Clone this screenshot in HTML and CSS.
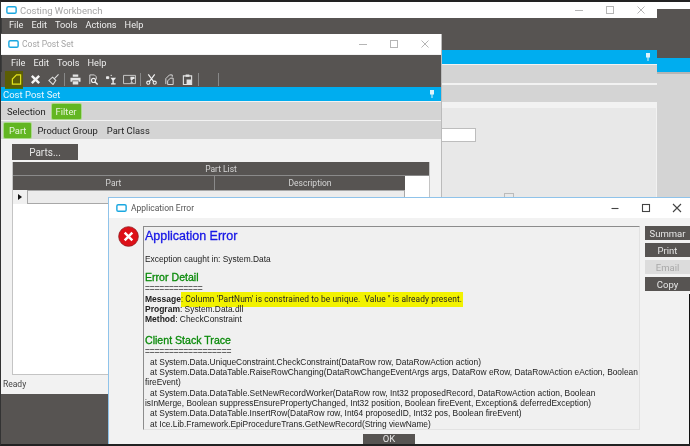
FILE: index.html
```html
<!DOCTYPE html>
<html lang="en">
<head>
    <meta charset="UTF-8">
    <title>Application Error</title>
    <link rel="stylesheet" href="styles.css">
</head>
<body>
    <div class="desktop">
        <!-- window peeking out on the right -->
        <div class="window back-window">
            <div class="dark-fill"></div>
            <div class="blue-bar"></div>
            <div class="gray-fill"></div>
        </div>

        <!-- Costing Workbench -->
        <div class="window workbench">
            <div class="title-bar">
                <svg class="app-icon" viewBox="0 0 12 9"><rect x="0.8" y="0.8" width="10.4" height="7.4" rx="1.5" fill="#fff" stroke="#1aa7e0" stroke-width="1.6"/></svg>
                <span class="title-text">Costing Workbench</span>
                <div class="win-controls">
                    <svg viewBox="0 0 10 10"><path d="M1 5.5h8" stroke="#b5b5b5"/></svg>
                    <svg viewBox="0 0 10 10"><rect x="1.5" y="1.5" width="7" height="7" fill="none" stroke="#b5b5b5"/></svg>
                    <svg viewBox="0 0 10 10"><path d="M1.5 1.5l7 7M8.5 1.5l-7 7" stroke="#b5b5b5"/></svg>
                </div>
            </div>
            <div class="menu-bar">
                <span>File</span><span>Edit</span><span>Tools</span><span>Actions</span><span>Help</span>
            </div>
            <div class="workbench-main">
                <div class="blue-bar pinned">
                    <svg class="pin" viewBox="0 0 6 8"><path d="M1 0h4v4.500h-1.500v3.500h-1v-3.500h-1.500z" fill="#dff3fb"/></svg>
                </div>
                <div class="gray-strip"></div>
                <div class="gray-strip second"></div>
                <div class="back-panel">
                    <div class="back-input"></div>
                    <div class="back-knob"></div>
                </div>
            </div>
        </div>

        <!-- Cost Post Set -->
        <div class="window cost-post">
            <div class="title-bar tall">
                <svg class="app-icon" viewBox="0 0 12 9"><rect x="0.8" y="0.8" width="10.4" height="7.4" rx="1.5" fill="#fff" stroke="#1aa7e0" stroke-width="1.6"/></svg>
                <span class="title-text small">Cost Post Set</span>
                <div class="win-controls">
                    <svg viewBox="0 0 10 10"><path d="M1 5.5h8" stroke="#b5b5b5"/></svg>
                    <svg viewBox="0 0 10 10"><rect x="1.5" y="1.5" width="7" height="7" fill="none" stroke="#b5b5b5"/></svg>
                    <svg viewBox="0 0 10 10"><path d="M1.5 1.5l7 7M8.5 1.5l-7 7" stroke="#b5b5b5"/></svg>
                </div>
            </div>
            <div class="menu-bar short">
                <span>File</span><span>Edit</span><span>Tools</span><span>Help</span>
            </div>
            <div class="tool-bar">
                <div class="tool active">
                    <svg viewBox="0 0 12 12"><path d="M1.500 11V5.500L6 1h4.500v10z" fill="none" stroke="#e3e51c" stroke-width="1.300"/></svg>
                </div>
                <div class="tool">
                    <svg viewBox="0 0 12 12"><path d="M2 2l8 8M10 2l-8 8" stroke="#f4f4f4" stroke-width="2.600"/></svg>
                </div>
                <div class="tool">
                    <svg viewBox="0 0 12 12"><path d="M11.500 .5L7 5M5 3.500l3.500 3.500-3 4.500-4.500-4.500z" fill="none" stroke="#dcdcdc" stroke-width="1.200"/></svg>
                </div>
                <i class="tool-sep"></i>
                <div class="tool">
                    <svg viewBox="0 0 12 12"><path d="M3 0.500h6v2.500h-6zM0.500 4h11v4.500h-2v-1.500h-7v1.500h-2zM3 8h6v3.500h-6z" fill="#e4e4e4"/></svg>
                </div>
                <div class="tool">
                    <svg viewBox="0 0 12 12"><path d="M2 11V1h5l2 2v3" fill="none" stroke="#dcdcdc"/><circle cx="6" cy="7" r="2.200" fill="none" stroke="#f0f0f0" stroke-width="1.200"/><path d="M7.500 8.500l3 3" stroke="#f0f0f0" stroke-width="1.500"/></svg>
                </div>
                <div class="tool">
                    <svg viewBox="0 0 12 12"><path d="M0.500 3h2.500v2h-2.500zM5 1.500h1.500" stroke="#eee" fill="#eee"/><path d="M5 4h6l-2.500 3v3h2v1.500h-5v-1.500h1.500v-3z" fill="#eee"/></svg>
                </div>
                <div class="tool wide">
                    <svg viewBox="0 0 14 12"><path d="M0.500 1.500h13v9h-13z" fill="none" stroke="#cfcfcf"/><path d="M8 3h4.500v2.500h-1.500l-2 2 2 2h-3l1-2-1-2z" fill="#e8e8e8"/></svg>
                </div>
                <i class="tool-sep"></i>
                <div class="tool">
                    <svg viewBox="0 0 12 12"><path d="M2.500 .5l6 8M9.500 .5l-6 8" stroke="#f0f0f0" stroke-width="1.300"/><circle cx="2.500" cy="9.500" r="1.700" fill="none" stroke="#f0f0f0" stroke-width="1.200"/><circle cx="9.500" cy="9.500" r="1.700" fill="none" stroke="#f0f0f0" stroke-width="1.200"/></svg>
                </div>
                <div class="tool">
                    <svg viewBox="0 0 12 12"><path d="M2 11V5l4-4h3v2M4 11.500h6V4.500H7L4 7.500z" fill="none" stroke="#e4e4e4"/></svg>
                </div>
                <div class="tool">
                    <svg viewBox="0 0 12 12"><path d="M1.500 2h9v9.500h-9z" fill="none" stroke="#e4e4e4" stroke-width="1.200"/><path d="M4 .5h4v2.500h-4zM5 6h5v5h-5z" fill="#e4e4e4"/></svg>
                </div>
                <i class="tool-sep"></i>
                <i class="tool-sep far"></i>
            </div>
            <div class="blue-bar pinned titled">
                <span>Cost Post Set</span>
                <svg class="pin" viewBox="0 0 6 8"><path d="M1 0h4v4.500h-1.500v3.500h-1v-3.500h-1.500z" fill="#dff3fb"/></svg>
            </div>
            <div class="tabs">
                <span class="tab">Selection</span>
                <span class="tab on">Filter</span>
            </div>
            <div class="tabs sub">
                <span class="tab on">Part</span>
                <span class="tab">Product Group</span>
                <span class="tab">Part Class</span>
            </div>
            <div class="filter-body">
                <button class="parts-btn">Parts...</button>
                <div class="part-list">
                    <div class="grid-caption">Part List</div>
                    <div class="grid-head">
                        <span class="col-part">Part</span>
                        <span class="col-desc">Description</span>
                    </div>
                    <div class="grid-row">
                        <span class="row-mark"><i></i></span>
                        <span class="row-cell"></span>
                    </div>
                </div>
            </div>
            <div class="status-bar">Ready</div>
        </div>

        <!-- Application Error dialog -->
        <div class="window error-dialog">
            <div class="title-bar dlg-title">
                <svg class="app-icon" viewBox="0 0 12 9"><rect x="0.8" y="0.8" width="10.4" height="7.4" rx="1.5" fill="#fff" stroke="#1aa7e0" stroke-width="1.6"/></svg>
                <span class="title-text dark">Application Error</span>
                <div class="win-controls dlg-controls">
                    <svg viewBox="0 0 10 10"><path d="M1.500 5.500h7" stroke="#444" stroke-width="1.100"/></svg>
                    <svg viewBox="0 0 10 10"><rect x="1.500" y="1.500" width="7" height="7" fill="none" stroke="#444" stroke-width="1.100"/></svg>
                    <svg viewBox="0 0 10 10"><path d="M1 1l8 8M9 1l-8 8" stroke="#444" stroke-width="1.100"/></svg>
                </div>
            </div>
            <div class="dlg-body">
                <div class="dlg-main">
                    <svg class="err-icon" viewBox="0 0 22 22">
                        <circle cx="11" cy="11" r="10.300" fill="#dd1018" stroke="#8e1a1e" stroke-width="0.800"/>
                        <path d="M7 7l8 8M15 7l-8 8" stroke="#fff" stroke-width="2.600"/>
                    </svg>
                    <div class="detail">
                        <h1>Application Error</h1>
                        <p class="line first">Exception caught in: System.Data</p>
                        <h2>Error Detail</h2>
                        <p class="line rule">============</p>
                        <p class="line"><b>Message</b><span class="mark">: Column 'PartNum' is constrained to be unique.&nbsp; Value '' is already present.</span></p>
                        <p class="line"><b>Program</b>: System.Data.dll</p>
                        <p class="line"><b>Method</b>: CheckConstraint</p>
                        <h2 class="gap">Client Stack Trace</h2>
                        <p class="line rule">==================</p>
                        <p class="line at">at System.Data.UniqueConstraint.CheckConstraint(DataRow row, DataRowAction action)</p>
                        <p class="line at">at System.Data.DataTable.RaiseRowChanging(DataRowChangeEventArgs args, DataRow eRow, DataRowAction eAction, Boolean</p>
                        <p class="line">fireEvent)</p>
                        <p class="line at">at System.Data.DataTable.SetNewRecordWorker(DataRow row, Int32 proposedRecord, DataRowAction action, Boolean</p>
                        <p class="line">isInMerge, Boolean suppressEnsurePropertyChanged, Int32 position, Boolean fireEvent, Exception&amp; deferredException)</p>
                        <p class="line at">at System.Data.DataTable.InsertRow(DataRow row, Int64 proposedID, Int32 pos, Boolean fireEvent)</p>
                        <p class="line at">at Ice.Lib.Framework.EpiProcedureTrans.GetNewRecord(String viewName)</p>
                    </div>
                    <div class="side-btns">
                        <button class="dlg-btn">Summar</button>
                        <button class="dlg-btn">Print</button>
                        <button class="dlg-btn off">Email</button>
                        <button class="dlg-btn">Copy</button>
                        <div class="edge"></div>
                    </div>
                </div>
                <div class="dlg-foot">
                    <button class="ok-btn">OK</button>
                </div>
            </div>
        </div>
    </div>
</body>
</html>
```

FILE: styles.css
```css
:root {
    --dark: #575452;
    --blue: #00adef;
    --strip: #d4d4d4;
    --soft: #f2f2f2;
}

* {
    margin: 0;
    padding: 0;
    box-sizing: border-box;
    font-family: 'Roboto', sans-serif;
}

body {
    background: #111;
    overflow: hidden;
}

.desktop {
    position: relative;
    width: 690px;
    height: 446px;
    background: #fff;
    border-top: 2px solid #222;
    border-bottom: 2px solid #222;
    border-left: 1px solid #333;
    overflow: hidden;
    filter: blur(0.35px);
}

/* Windows sit on a free canvas */
.window {
    position: absolute;
    display: flex;
    flex-direction: column;
}

.back-window {
    left: 656px;
    top: 7px;
    width: 33px;
    height: 437px;
}

.dark-fill {
    height: 49px;
    background: var(--dark);
}

.gray-fill {
    flex: 1;
    background: var(--strip);
    border-top: 2px solid #b5b5b5;
}

.blue-bar {
    height: 14px;
    background: var(--blue);
    flex-shrink: 0;
}

.workbench {
    left: 0;
    top: 0;
    width: 656px;
    height: 442px;
    background: var(--dark);
}

.title-bar {
    height: 16px;
    background: #fff;
    display: flex;
    align-items: center;
    padding-left: 5px;
    flex-shrink: 0;
}

.title-bar.tall {
    height: 20px;
    padding-left: 7px;
}

.app-icon {
    width: 11px;
    height: 8px;
    margin-right: 3px;
    flex-shrink: 0;
}

.title-text {
    font-size: 9.500px;
    color: #a5a5a5;
}

.title-text.small {
    font-size: 8.500px;
}

.title-text.dark {
    font-size: 8.500px;
    color: #555;
}

.win-controls {
    margin-left: auto;
    display: flex;
    gap: 21px;
    padding-right: 11px;
}

.win-controls svg {
    width: 10px;
    height: 10px;
}

.menu-bar {
    height: 15px;
    padding: 0 0 2px 7px;
    display: flex;
    align-items: center;
    gap: 8px;
    color: #eeeeee;
    font-size: 9.200px;
    background: var(--dark);
    border-left: 1px solid #3c3c3c;
}

.workbench-main {
    flex: 1;
    margin: 17px 0 0 440px;
    display: flex;
    flex-direction: column;
    border-left: 1px solid #bbb;
    background: var(--soft);
}

.pinned {
    display: flex;
    align-items: center;
    justify-content: space-between;
}

.workbench-main .pinned {
    justify-content: flex-end;
}

.pin {
    width: 6px;
    height: 8px;
    margin-right: 6px;
}

.gray-strip {
    height: 18px;
    margin-top: 1px;
    background: var(--strip);
}

.gray-strip.second {
    margin-top: 2px;
    height: 17px;
}

.back-panel {
    position: relative;
    flex: 1;
    margin: 4px 1px 0 0;
    background: #e8e8e8;
    border-top: 2px solid #f2f2f2;
}

.back-input {
    margin-top: 20px;
    width: 34px;
    height: 14px;
    background: #fff;
    border: 1px solid #bdbdbd;
    border-left: none;
}

.back-knob {
    margin: 51px 0 0 62px;
    width: 10px;
    height: 10px;
    border: 1px solid #bbb;
}

.cost-post {
    left: 0;
    top: 32px;
    width: 441px;
    height: 360px;
    background: var(--soft);
    border-right: 1px solid #bbb;
}

.menu-bar.short {
    height: 17px;
    margin-top: 1px;
    padding-left: 9px;
}

.tool-bar {
    height: 15px;
    background: var(--dark);
    display: flex;
    align-items: center;
    padding-left: 4px;
    position: relative;
}

.tool {
    width: 18px;
    height: 18px;
    display: flex;
    align-items: center;
    justify-content: center;
    flex-shrink: 0;
}

.tool svg {
    width: 11px;
    height: 11px;
}

.tool.wide svg {
    width: 13px;
}

.tool.active {
    background: #5c5e05;
    border-bottom: 1px solid #3f7a10;
    justify-content: flex-end;
    padding-right: 1px;
    margin-right: 3px;
}

.tool-sep {
    width: 1px;
    height: 13px;
    background: #888;
    margin: 0 1.500px;
}

.tool-sep.far {
    margin-left: 18px;
}

.titled {
    padding-left: 2px;
    color: #e8f7fd;
    font-size: 9.500px;
}

.tabs {
    height: 18px;
    margin-top: 1px;
    background: var(--strip);
    display: flex;
    align-items: center;
    padding-left: 3px;
    gap: 3px;
    font-size: 9.400px;
    color: #222;
}

.tabs.sub {
    margin-top: 1px;
    gap: 3px;
}

.tab {
    padding: 0 3px;
    line-height: 15px;
}

.tab.on {
    background: #62b622;
    color: #e8f5dc;
    box-shadow: 0 0 0 1px #a9d98a;
    border-radius: 1px;
    padding: 0 4px;
}

.tabs.sub .tab.on {
    padding: 0 5px;
}

.filter-body {
    flex: 1;
    padding: 5px 11px 0;
    display: flex;
    flex-direction: column;
    min-height: 0;
}

.parts-btn {
    width: 66px;
    height: 16px;
    background: var(--dark);
    border: none;
    color: #e6e6e6;
    font-size: 10px;
}

.part-list {
    margin-top: 2px;
    flex: 1;
    background: #fff;
    border: 1px solid #c4c4c4;
    border-top: none;
}

.grid-caption {
    height: 14px;
    background: var(--dark);
    color: #d5d5d5;
    font-size: 8.500px;
    line-height: 14px;
    text-align: center;
    border-bottom: 1px solid #8a8a8a;
}

.grid-head {
    display: flex;
    height: 14px;
    width: 392px;
    background: var(--dark);
    color: #d5d5d5;
    font-size: 8.500px;
    line-height: 14px;
    text-align: center;
}

.col-part {
    width: 202px;
    border-right: 1px solid #8a8a8a;
}

.col-desc {
    flex: 1;
}

.grid-row {
    display: flex;
    width: 392px;
    height: 14px;
}

.row-mark {
    width: 14px;
    background: #f0f0f0;
    display: flex;
    align-items: center;
    justify-content: center;
}

.row-mark i {
    border-left: 4px solid #111;
    border-top: 3px solid transparent;
    border-bottom: 3px solid transparent;
}

.row-cell {
    flex: 1;
    background: #ececec;
    border: 1px solid #a8a8a8;
}

.status-bar {
    height: 19px;
    background: var(--soft);
    font-size: 8.500px;
    line-height: 19px;
    color: #444;
    padding-left: 2px;
}

.error-dialog {
    left: 107px;
    top: 195px;
    width: 582px;
    height: 247px;
    background: var(--soft);
    border: 1px solid #8fc3ea;
    border-width: 1px 0 0 1px;
}

.dlg-title {
    height: 20px;
    padding-left: 7px;
}

.dlg-title .app-icon {
    margin-right: 4px;
}

.dlg-controls {
    padding-right: 8px;
}

.dlg-body {
    flex: 1;
    display: flex;
    flex-direction: column;
    min-height: 0;
}

.dlg-main {
    display: flex;
    height: 212px;
    padding-top: 8px;
}

.err-icon {
    width: 21px;
    height: 21px;
    margin: 0 4px 0 9px;
    flex-shrink: 0;
}

.detail {
    width: 497px;
    flex-shrink: 0;
    background: #f0f0f0;
    border-top: 1px solid #8c8c8c;
    border-left: 1px solid #8c8c8c;
    border-right: 1px solid #e2e2e2;
    border-bottom: 1px solid #e2e2e2;
    padding: 2px 0 0 1px;
    overflow: hidden;
    font-family: 'Liberation Sans', sans-serif;
    color: #222;
}

.detail h1 {
    font-family: inherit;
    font-size: 12.500px;
    font-weight: normal;
    -webkit-text-stroke: 0.3px #1616e6;
    color: #1616e6;
    line-height: 15px;
}

.detail h2 {
    font-family: inherit;
    font-size: 10.600px;
    font-weight: normal;
    -webkit-text-stroke: 0.3px #0a8a0a;
    color: #0a8a0a;
    line-height: 12px;
    margin-top: 7px;
}

.detail h2.gap {
    margin-top: 10px;
}

.line {
    font-family: inherit;
    font-size: 8.400px;
    line-height: 10.300px;
    white-space: nowrap;
}

.line.first {
    margin-top: 10px;
}

.line.rule {
    color: #666;
    font-weight: bold;
    letter-spacing: -0.1px;
}

.line.at {
    padding-left: 5px;
}

.line b {
    font-family: inherit;
    font-size: 8.500px;
}

.mark {
    background: #f2f200;
    padding: 2px 1px 3px 0;
    letter-spacing: 0.08px;
}

.side-btns {
    display: flex;
    flex-direction: column;
    padding-left: 5px;
    width: 50px;
    gap: 3px;
    flex-shrink: 0;
}

.dlg-btn {
    width: 45px;
    height: 14px;
    background: var(--dark);
    color: #e6e6e6;
    border: none;
    font-size: 9.500px;
    flex-shrink: 0;
}

.dlg-btn.off {
    background: #dcdcdc;
    color: #a8a8a8;
}

.edge {
    flex: 1;
    margin-bottom: -20px;
    border-right: 1.500px solid #111;
}

.dlg-foot {
    display: flex;
    padding-left: 254px;
    padding-top: 4px;
}

.ok-btn {
    width: 52px;
    height: 10px;
    background: var(--dark);
    color: #e6e6e6;
    border: none;
    font-size: 9.500px;
    line-height: 10px;
}
```
